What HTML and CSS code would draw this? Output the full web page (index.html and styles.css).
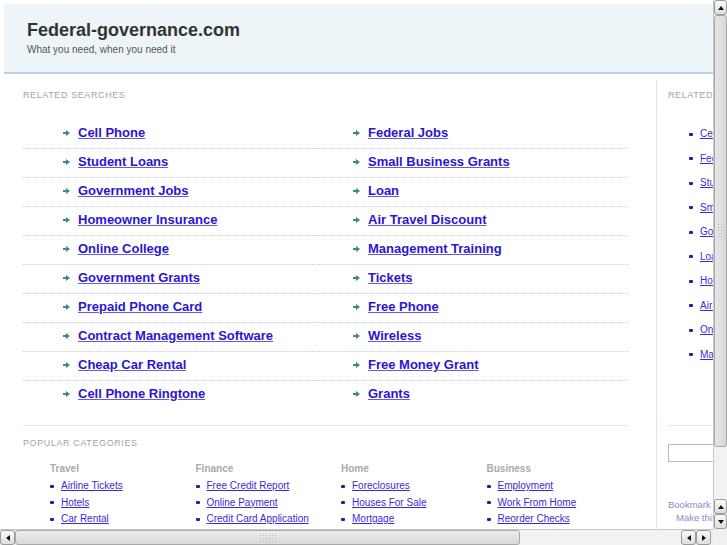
FILE: index.html
```html
<!DOCTYPE html>
<html lang="en">

<head>
   <meta charset="UTF-8">
   <meta name="viewport" content="width=device-width, initial-scale=1.0">
   <title>Federal-governance.com</title>
   <link rel="stylesheet" href="styles.css">
</head>

<body>
   <div class="frame">
      <div class="viewport">
         <div class="page">
            <div class="top">
               <h1>Federal-governance.com</h1>
               <p class="tagline">What you need, when you need it</p>
            </div>

            <div class="content">
               <div class="main">
                  <p class="label">Related Searches</p>
                  <ul class="related">
                     <li><span class="arrow"></span><a href="#">Cell Phone</a></li>
                     <li><span class="arrow"></span><a href="#">Federal Jobs</a></li>
                     <li><span class="arrow"></span><a href="#">Student Loans</a></li>
                     <li><span class="arrow"></span><a href="#">Small Business Grants</a></li>
                     <li><span class="arrow"></span><a href="#">Government Jobs</a></li>
                     <li><span class="arrow"></span><a href="#">Loan</a></li>
                     <li><span class="arrow"></span><a href="#">Homeowner Insurance</a></li>
                     <li><span class="arrow"></span><a href="#">Air Travel Discount</a></li>
                     <li><span class="arrow"></span><a href="#">Online College</a></li>
                     <li><span class="arrow"></span><a href="#">Management Training</a></li>
                     <li><span class="arrow"></span><a href="#">Government Grants</a></li>
                     <li><span class="arrow"></span><a href="#">Tickets</a></li>
                     <li><span class="arrow"></span><a href="#">Prepaid Phone Card</a></li>
                     <li><span class="arrow"></span><a href="#">Free Phone</a></li>
                     <li><span class="arrow"></span><a href="#">Contract Management Software</a></li>
                     <li><span class="arrow"></span><a href="#">Wireless</a></li>
                     <li><span class="arrow"></span><a href="#">Cheap Car Rental</a></li>
                     <li><span class="arrow"></span><a href="#">Free Money Grant</a></li>
                     <li><span class="arrow"></span><a href="#">Cell Phone Ringtone</a></li>
                     <li><span class="arrow"></span><a href="#">Grants</a></li>
                  </ul>

                  <div class="rule"></div>
                  <p class="label">Popular Categories</p>
                  <div class="cats">
                     <div class="cat">
                        <h3>Travel</h3>
                        <ul>
                           <li><a href="#">Airline Tickets</a></li>
                           <li><a href="#">Hotels</a></li>
                           <li><a href="#">Car Rental</a></li>
                        </ul>
                     </div>
                     <div class="cat">
                        <h3>Finance</h3>
                        <ul>
                           <li><a href="#">Free Credit Report</a></li>
                           <li><a href="#">Online Payment</a></li>
                           <li><a href="#">Credit Card Application</a></li>
                        </ul>
                     </div>
                     <div class="cat">
                        <h3>Home</h3>
                        <ul>
                           <li><a href="#">Foreclosures</a></li>
                           <li><a href="#">Houses For Sale</a></li>
                           <li><a href="#">Mortgage</a></li>
                        </ul>
                     </div>
                     <div class="cat">
                        <h3>Business</h3>
                        <ul>
                           <li><a href="#">Employment</a></li>
                           <li><a href="#">Work From Home</a></li>
                           <li><a href="#">Reorder Checks</a></li>
                        </ul>
                     </div>
                  </div>
               </div>

               <div class="side">
                  <p class="label">Related Searches</p>
                  <ul class="side-list">
                     <li><a href="#">Cell Phone</a></li>
                     <li><a href="#">Federal Jobs</a></li>
                     <li><a href="#">Student Loans</a></li>
                     <li><a href="#">Small Business Grants</a></li>
                     <li><a href="#">Government Jobs</a></li>
                     <li><a href="#">Loan</a></li>
                     <li><a href="#">Homeowner Insurance</a></li>
                     <li><a href="#">Air Travel Discount</a></li>
                     <li><a href="#">Online College</a></li>
                     <li><a href="#">Management Training</a></li>
                  </ul>
                  <div class="rule"></div>
                  <input class="search" type="text">
                  <p class="bookmark">Bookmark this page</p>
                  <p class="bookmark indent">Make this your homepage</p>
               </div>
            </div>
         </div>
      </div>

      <!-- fake scrollbars from the screenshot -->
      <div class="vbar">
         <span class="btn up"></span>
         <span class="thumb"><span class="grip"></span></span>
         <span class="track"></span>
         <span class="btn up"></span>
         <span class="btn down"></span>
      </div>
      <div class="hbar">
         <span class="btn left"></span>
         <span class="thumb"><span class="grip"></span></span>
         <span class="track"></span>
         <span class="btn left"></span>
         <span class="btn right"></span>
      </div>
      <div class="corner"></div>
   </div>
</body>

</html>
```

FILE: styles.css
```css
* {
   padding: 0;
   margin: 0;
   box-sizing: border-box;
}

body {
   font-family: "Liberation Sans", Arial, sans-serif;
   background: #fff;
   overflow: hidden;
}

ul {
   list-style: none;
}

.frame {
   width: 727px;
   height: 545px;
   display: grid;
   grid-template-columns: 713px 14px;
   grid-template-rows: 529px 16px;
}

.viewport {
   overflow: hidden;
   background: #fff;
}

.page {
   width: 1000px;
   padding: 4px 0 0 4px;
}

/* header */
.top {
   height: 70px;
   background: #eef5f8;
   border-bottom: 2px solid #bccfec;
   padding: 15px 0 0 23px;
}

.top h1 {
   font-size: 18px;
   line-height: 22px;
   color: #333;
   font-weight: bold;
}

.tagline {
   margin-top: 2px;
   font-size: 10px;
   line-height: 13px;
   color: #555;
}

.content {
   display: flex;
   align-items: flex-start;
}

.label {
   font-size: 9px;
   line-height: 12px;
   letter-spacing: 0.6px;
   color: #a3a3a3;
   text-transform: uppercase;
}

/* main column */
.main {
   width: 605px;
   margin-left: 19px;
   padding-top: 15px;
}

.related {
   margin-top: 19px;
   display: grid;
   grid-template-columns: 290px 315px;
}

.related li {
   height: 29px;
   display: flex;
   align-items: flex-start;
   padding: 5px 0 0 40px;
   border-bottom: 1px dotted #c3d1e6;
   font-size: 13px;
   line-height: 16px;
   font-weight: bold;
}

.related li:nth-last-child(-n+2) {
   border-bottom: none;
   height: 28px;
}

.related a {
   color: #2a16d2;
   text-decoration-color: #6a5ae0;
}

.arrow {
   position: relative;
   width: 4px;
   height: 2px;
   margin: 7px 11px 0 0;
   background: #3f8a80;
}

.arrow::after {
   content: "";
   position: absolute;
   left: 3px;
   top: -2.5px;
   border-left: 4px solid #3f8a80;
   border-top: 3.5px solid transparent;
   border-bottom: 3.5px solid transparent;
}

.rule {
   margin-top: 16px;
   border-top: 1px solid #dfe7f1;
}

.main .rule + .label {
   margin-top: 11px;
}

.cats {
   margin-top: 13px;
   padding-left: 27px;
   display: grid;
   grid-template-columns: repeat(4, 145.5px);
}

.cat h3 {
   font-size: 10px;
   line-height: 13px;
   color: #aaa;
   margin-bottom: 3px;
}

.cat li,
.side-list li {
   display: flex;
   align-items: center;
   font-size: 10px;
   line-height: 16.5px;
}

.cat li::before,
.side-list li::before {
   content: "";
   width: 4px;
   height: 3px;
   margin-right: 7px;
   border-radius: 1px;
   background: #2a1ca8;
}

.cat a,
.side-list a {
   color: #3b2ad9;
   white-space: nowrap;
}

/* right column */
.side {
   width: 200px;
   margin: 6px 0 0 28px;
   padding: 9px 0 0 11px;
   border-left: 1px solid #dbe3f3;
   height: 460px;
}

.side-list {
   margin-top: 21px;
   padding-left: 21px;
}

.side-list li {
   line-height: 24.5px;
}

.side .rule {
   margin-top: 58px;
}

.search {
   display: block;
   margin-top: 18px;
   width: 150px;
   height: 18px;
   border: 1px solid #bbb;
   background: #fff;
}

.bookmark {
   font-size: 9.5px;
   line-height: 13px;
   color: #8c89cf;
   white-space: nowrap;
}

.search + .bookmark {
   margin-top: 36px;
}

.indent {
   padding-left: 8px;
}

/* scrollbars */
.vbar {
   grid-column: 2;
   grid-row: 1;
   display: flex;
   flex-direction: column;
   background: #ededed;
   border-left: 1px solid #c9c9c9;
}

.hbar {
   grid-column: 1;
   grid-row: 2;
   display: flex;
   background: #ededed;
   border-top: 1px solid #c9c9c9;
   padding-right: 2px;
}

.corner {
   grid-column: 2;
   grid-row: 2;
   background: #f0f0f0;
}

.btn {
   flex: 0 0 15px;
   display: flex;
   align-items: center;
   justify-content: center;
   background: linear-gradient(#fafafa, #dedede);
   border: 1px solid #9a9a9a;
   border-radius: 3px;
}

.btn::after {
   content: "";
   width: 0;
   height: 0;
   border: 3px solid transparent;
}

.up::after {
   border-top: 0;
   border-bottom: 4px solid #111;
}

.down::after {
   border-bottom: 0;
   border-top: 4px solid #111;
}

.left::after {
   border-left: 0;
   border-right: 4px solid #111;
}

.right::after {
   border-right: 0;
   border-left: 4px solid #111;
}

.vbar .thumb {
   flex: 0 0 432px;
}

.hbar .thumb {
   flex: 0 0 505px;
}

.thumb {
   display: flex;
   align-items: center;
   justify-content: center;
   background: linear-gradient(to right, #e6e6e6, #d8d8d8);
   border: 1px solid #a8a8a8;
   border-radius: 3px;
}

.hbar .thumb {
   background: linear-gradient(#ececec, #d9d9d9);
}

.grip {
   width: 8px;
   height: 16px;
   background-image: radial-gradient(#b8b8b8 0.8px, transparent 1px);
   background-size: 3px 3px;
}

.hbar .grip {
   width: 18px;
   height: 8px;
}

.track {
   flex: 1;
   background: #f2f2f2;
}
```
